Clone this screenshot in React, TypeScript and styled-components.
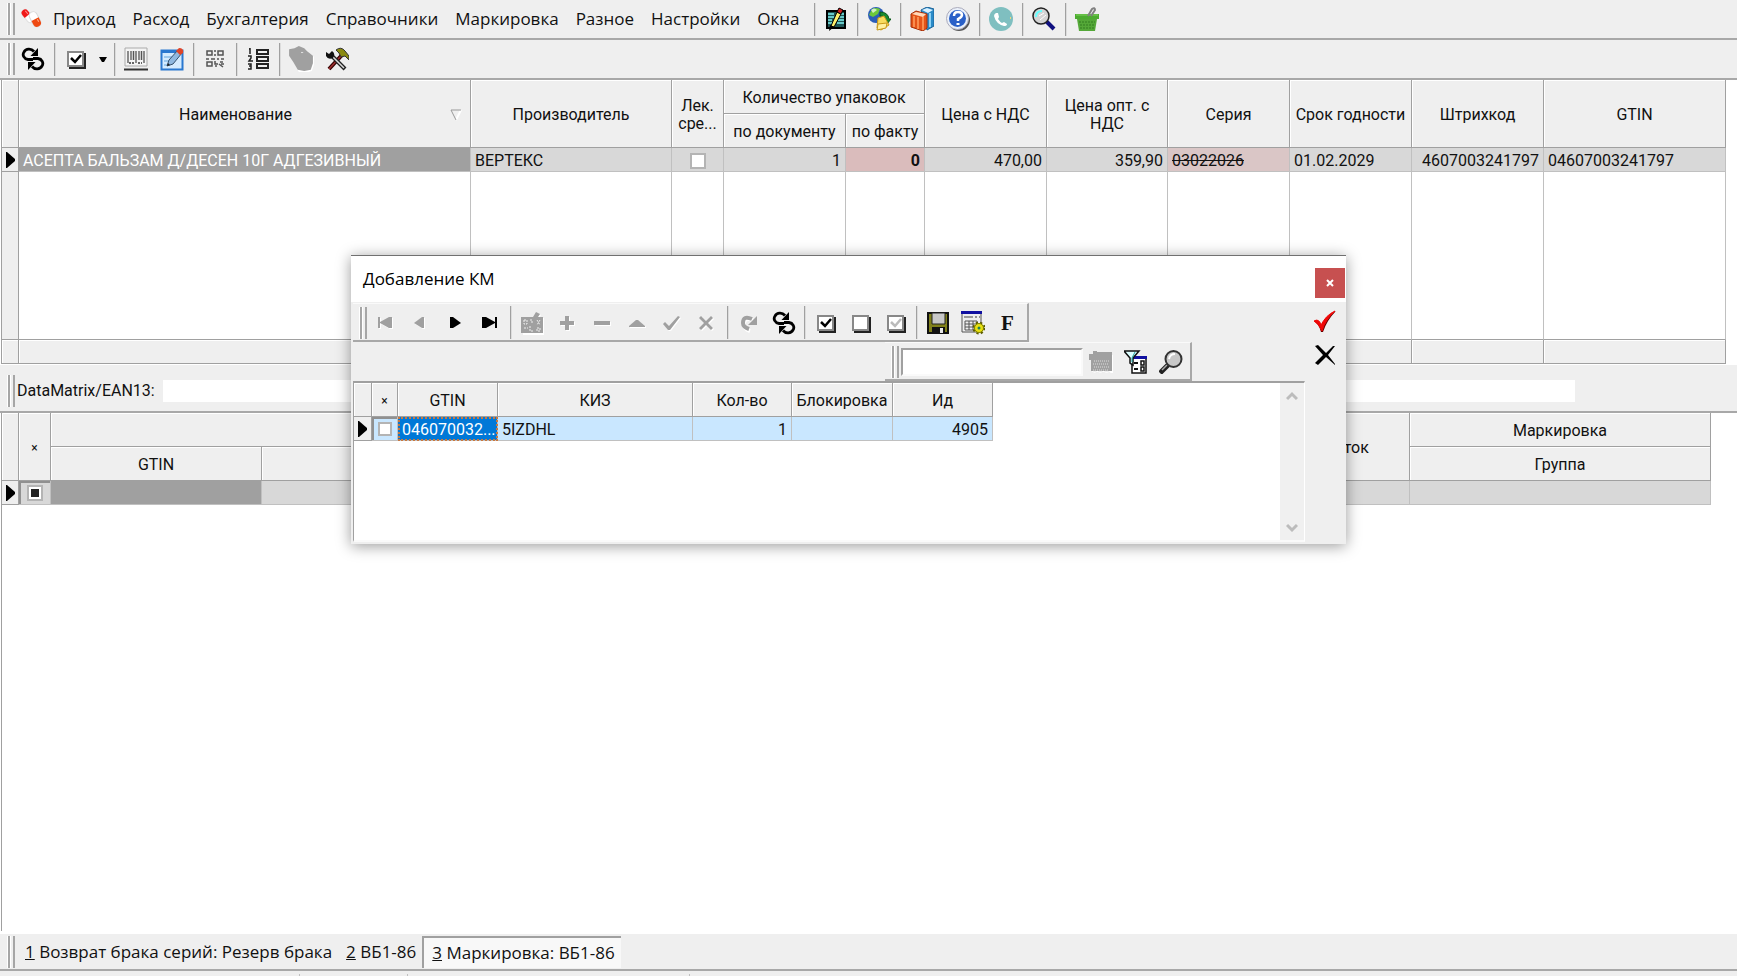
import React from "react";
import styled, { createGlobalStyle, css } from "styled-components";

const line = "#a0a0a0";
const softLine = "#c0c0c0";
const face = "#efefef";

const GlobalStyle = createGlobalStyle`
  *, *::before, *::after { box-sizing: border-box; }
  body { margin: 0; background: #fff; color: #111; }
  button, input { font: inherit; color: inherit; }
`;

const Screen = styled.div`
  position: relative;
  display: flex;
  flex-direction: column;
  min-height: 100vh;
  overflow: hidden;
  font: 16px/18px Roboto, "Liberation Sans", sans-serif;
  background: #fff;
`;

const Bar = styled.div<{ $height: number }>`
  display: flex;
  align-items: center;
  flex: none;
  height: ${(p) => p.$height}px;
  padding-left: 8px;
  background: ${face};
  border-bottom: 2px solid #a8a8a8;
`;

const Grip = styled.span<{ $gap?: number }>`
  flex: none;
  width: 7px;
  height: 32px;
  margin-right: ${(p) => p.$gap ?? 0}px;
  border: solid #a6a6a6;
  border-width: 0 2px;
  box-shadow: -1px 0 #fff, inset 1px 0 #fff;
`;

const Separator = styled.span`
  flex: none;
  width: 2px;
  height: 33px;
  margin: 0 2px 0 3px;
  background: #a0a0a0;
  border-right: 1px solid #dcdcdc;
`;

const IconButton = styled.button<{ $width?: number }>`
  display: grid;
  place-items: center;
  flex: none;
  width: ${(p) => p.$width ?? 36}px;
  height: 32px;
  padding: 0;
  border: 0;
  background: none;
  svg { display: block; }
`;

const FontButton = styled(IconButton)`
  font: bold 21px/24px "Liberation Serif", serif;
`;

const Menu = styled.nav`
  display: flex;
  flex: none;
  width: 768px;
  padding-left: 1px;
`;

const MenuItem = styled.button`
  padding: 0 8px 0 9px;
  border: 0;
  background: none;
  font: 17px/24px "Open Sans", "Noto Sans", sans-serif;
  white-space: nowrap;
`;

const Grid = styled.table`
  width: calc(100% - 12px);
  margin-left: 1px;
  table-layout: fixed;
  border-collapse: separate;
  border-spacing: 0;
  border-left: 1px solid ${line};
`;

const HeadCell = styled.th<{ $height?: number }>`
  height: ${(p) => p.$height ?? 34}px;
  padding: 2px 2px 0;
  overflow: hidden;
  font-weight: 400;
  white-space: nowrap;
  background: ${face};
  border: solid ${line};
  border-width: 0 1px 1px 0;
  box-shadow: inset 1px 1px #fff;
`;

const HeadLabel = styled.span`
  display: flex;
  align-items: center;
  justify-content: center;
  svg { flex: none; margin-right: 6px; }
  span { flex: 1; }
`;

const Mark = styled.span`
  font-size: 12px;
`;

type Tone = "plain" | "selected" | "alarm" | "warning" | "light" | "focus" | "sunken" | "lightSunken";

const tones: Record<Tone, ReturnType<typeof css>> = {
  plain: css`background: #d8d8d8;`,
  selected: css`background: #a0a0a0; color: #fff;`,
  alarm: css`background: #dabcbc; font-weight: 700;`,
  warning: css`background: #dac6c6; text-decoration: line-through;`,
  light: css`background: #c9e7ff;`,
  focus: css`background: #0078d7; color: #fff; outline: 2px dotted #c87840; outline-offset: -2px;`,
  sunken: css`background: #d8d8d8; padding-top: 0; box-shadow: inset 2px 2px #909090;`,
  lightSunken: css`background: #c9e7ff; padding-top: 0; box-shadow: inset 2px 2px #909090;`,
};

const Cell = styled.td<{ $tone?: Tone; $align?: "left" | "right" | "center" }>`
  height: 24px;
  padding: 2px 4px 0 4px;
  overflow: hidden;
  white-space: nowrap;
  text-align: ${(p) => p.$align ?? "left"};
  border: solid ${softLine};
  border-width: 0 1px 1px 0;
  ${(p) => tones[p.$tone ?? "plain"]}
`;

const RowMarker = styled.td`
  padding: 0 0 0 3px;
  background: ${face};
  border: solid ${line};
  border-width: 0 1px 1px 0;
  svg { display: block; }
`;

const EmptyCell = styled.td<{ $face?: boolean }>`
  height: 168px;
  background: ${(p) => (p.$face ? face : "#fff")};
  border-right: 1px solid ${(p) => (p.$face ? line : softLine)};
  border-bottom: 1px solid ${line};
`;

const FootCell = styled.td`
  height: 24px;
  background: ${face};
  border: solid ${line};
  border-width: 0 1px 1px 0;
  box-shadow: inset 1px 1px #fff;
`;

const Tick = styled.input<{ $size: number }>`
  appearance: none;
  display: block;
  width: ${(p) => p.$size}px;
  height: ${(p) => p.$size}px;
  margin: 0 auto;
  background: #fff;
  border: 2px solid #b4b4b4;
  &:checked { background: #222 content-box; padding: 2px; box-shadow: inset 0 0 0 2px #fff; }
`;

const ScanBar = styled(Bar)`
  padding: 6px 162px 0 8px;
  margin-top: 1px;
`;

const ScanLabel = styled.label`
  flex: none;
  width: 148px;
  padding-left: 2px;
`;

const ScanInput = styled.input`
  flex: 1;
  min-width: 0;
  height: 22px;
  padding: 0 4px;
  border: 0;
  background: #fff;
`;

const Lower = styled.div`
  flex: 1;
  min-height: 240px;
  margin-left: 1px;
  border-left: 1px solid ${line};
`;

const LowerGrid = styled(Grid)`
  width: calc(100% - 25px);
  margin-left: -1px;
`;

const TabBar = styled.div`
  display: flex;
  align-items: center;
  flex: none;
  height: 37px;
  margin-top: 3px;
  padding-left: 8px;
  background: ${face};
  border-bottom: 2px solid #a8a8a8;
`;

const Tab = styled.button<{ $active?: boolean }>`
  height: 32px;
  padding: 0 6px 0 8px;
  border: 0;
  background: none;
  font: 17px/24px "Open Sans", "Noto Sans", sans-serif;
  white-space: nowrap;
  ${(p) =>
    p.$active &&
    css`
      background: #f8f8f8;
      border: solid #a0a0a0;
      border-width: 2px 0 0 2px;
    `}
`;

const StatusBar = styled.div`
  display: flex;
  align-items: flex-end;
  flex: none;
  height: 5px;
  background: ${face};
`;

const StatusPane = styled.span<{ $width: number }>`
  width: ${(p) => p.$width}px;
  height: 2px;
  border-right: 1px solid ${softLine};
`;

const Dialog = styled.section`
  position: absolute;
  left: 351px;
  top: 255px;
  width: 995px;
  background: ${face};
  border-top: 1px solid #707070;
  box-shadow: 0 2px 14px rgba(0, 0, 0, 0.4);
`;

const DialogTitle = styled.header`
  display: flex;
  align-items: center;
  justify-content: space-between;
  height: 46px;
  padding: 0 1px 0 12px;
  background: #fff;
`;

const DialogHeading = styled.h1`
  margin: 0;
  font: 17px/24px "Open Sans", "Noto Sans", sans-serif;
  color: #000;
`;

const CloseButton = styled.button`
  display: grid;
  place-items: center;
  width: 30px;
  height: 30px;
  margin-top: 8px;
  padding: 0;
  border: 0;
  background: #c75050;
`;

const DialogBody = styled.div`
  display: flex;
  padding: 1px 0 2px 2px;
`;

const DialogMain = styled.div`
  flex: 1;
  min-width: 0;
`;

const DialogSide = styled.div`
  display: flex;
  flex-direction: column;
  flex: none;
  gap: 1px;
  width: 41px;
  padding: 3px 0 0 2px;
`;

const Panel = styled.div<{ $left?: number }>`
  display: flex;
  align-items: center;
  width: fit-content;
  height: 39px;
  margin-left: ${(p) => p.$left ?? 0}px;
  padding: 1px 2px 0 7px;
  border: solid;
  border-width: 1px 2px 2px 0;
  border-color: #fafafa #a8a8a8 #a8a8a8 #fff;
`;

const FilterInput = styled.input`
  width: 182px;
  height: 28px;
  margin-left: 2px;
  padding: 0 4px;
  background: #fff;
  border: 2px solid;
  border-color: #a0a0a0 #fafafa #fafafa #a0a0a0;
`;

const GridFrame = styled.div`
  display: flex;
  height: 161px;
  border: solid;
  border-width: 2px 1px 2px 1px;
  border-color: #a0a0a0 #fff #fafafa #a0a0a0;
  background: #fff;
`;

const GridArea = styled.div`
  flex: 1;
`;

const DialogGrid = styled(Grid)`
  width: 639px;
  margin: 0;
  border-left: 0;
`;

const Scrollbar = styled.div`
  display: flex;
  flex-direction: column;
  justify-content: space-between;
  width: 24px;
  padding: 3px 0 2px;
  background: #f0f0f0;
`;

const ScrollButton = styled.button`
  display: grid;
  place-items: center;
  height: 20px;
  padding: 0;
  border: 0;
  background: none;
`;

const Svg = ({ size = 24, children }: { size?: number; children: React.ReactNode }) => (
  <svg width={size} height={size} viewBox="0 0 24 24" fill="none" aria-hidden="true">
    {children}
  </svg>
);

const Pill = () => (
  <Svg>
    <g transform="rotate(50 8 9)">
      <rect x="1" y="5" width="15" height="7" rx="3.500" fill="#fff" stroke="#e0e0e0" />
      <path d="M8 5H4.500a3.500 3.500 0 0 0 0 7H8z" fill="#f01818" />
      <path d="M3 7h4" stroke="#ff8a8a" />
    </g>
    <g transform="rotate(62 17 14)">
      <rect x="7" y="10" width="16" height="8" rx="4" fill="#fff" stroke="#d8d8d8" />
      <path d="M15 10h4a4 4 0 0 1 0 8h-4z" fill="#ef4a12" />
      <path d="M16 12h3" stroke="#ffb090" />
    </g>
  </Svg>
);

const RefreshHalf = () => (
  <>
    <path d="M12 12.500H7C3 12 1 8 3 5C5 1.500 10 1 13 4.500" stroke="#000" strokeWidth="2.800" />
    <path d="M17 1v8H9.500z" fill="#000" />
  </>
);

const Refresh = () => (
  <Svg>
    <RefreshHalf />
    <g transform="rotate(180 12 12)">
      <RefreshHalf />
    </g>
  </Svg>
);

const BoxIcon = ({ check }: { check?: string }) => (
  <Svg>
    <path d="M5 6h17v16H5z" fill="#222" />
    <path d="M4 5h15v14H4z" fill="#fff" stroke="#888" strokeWidth="2" />
    {check && <path d="M7 11l4 4l6-7" stroke={check} strokeWidth="2.500" />}
  </Svg>
);

const Caret = () => (
  <svg width="8" height="5" viewBox="0 0 8 5" aria-hidden="true">
    <path d="M0 0h8L5 5H3z" fill="#000" />
  </svg>
);

const Barcode = () => (
  <Svg>
    <path d="M1 1h22v18H1z" fill="#f4f4f4" stroke="#aaa" />
    <path d="M0 22.500h24" stroke="#333" strokeWidth="2" />
    <path d="M4 4v12M7 4v9M12 4v12M15 4v9M20 4v12" stroke="#555" strokeWidth="1.300" />
    <path d="M9.500 4v9M17.500 4v9" stroke="#555" strokeWidth="1.500" />
    <path d="M5 16h6M14 16h4" stroke="#666" strokeWidth="2" strokeDasharray="2 1" />
  </Svg>
);

const EditForm = () => (
  <Svg>
    <path d="M1.500 3.500h21v19h-21z" fill="#d4ebff" stroke="#2a78d0" strokeWidth="2" />
    <path d="M1 3h21v3H1z" fill="#2a78d0" />
    <path d="M4 10h13M4 14h9M4 18h6" stroke="#9cc8ee" strokeWidth="2" />
    <path d="M7 19l2-6L18 3l4 3l-9 11z" fill="#8fb8e0" stroke="#35506c" />
    <path d="M16 4l3-3q5 0 4 5l-3 2z" fill="#e04428" />
    <path d="M7 19l1-3l2 2z" fill="#222" />
  </Svg>
);

const QrCode = () => (
  <Svg>
    <g stroke="#555" strokeWidth="1.500">
      <path d="M4 4h5v4H4zM15 4h5v4h-5zM4 15h5v4H4z" />
      <path d="M12 3v2M12 7v2M3 12h3M8 12h4M14 12h2M18 12h3M12 14v3h3M17 15h3M12 19h2M16 17l4 3M18 17h3" />
    </g>
  </Svg>
);

const NumberedList = () => (
  <Svg>
    <g stroke="#222" strokeWidth="2">
      <path d="M11 3h11v4H11zM11 10h11v4H11zM11 17h11v4H11z" />
      <path d="M4 1v6M3 2h1M2 9h3v2L3 14h4M2 17h3v2H3M5 19v3H2" strokeWidth="1.500" />
    </g>
  </Svg>
);

const Hand = () => (
  <Svg size={26}>
    <path d="M1 3l5-1l4-2l5 2l3 3l5 4v7l-2 6l-6 2l-6-1l-4-8l-4-6z" fill="#fff" transform="translate(1 1)" />
    <path d="M1 3l5-1l4-2l5 2l3 3l5 4v7l-2 6l-6 1l-6-1l-4-7l-4-6z" fill="#a0a0a0" />
    <path d="M12 6h2" stroke="#ddd" strokeWidth="1" />
  </Svg>
);

const Tools = () => (
  <Svg>
    <path d="M4 22L17 8" stroke="#300" strokeWidth="4" />
    <path d="M4 22L17 8" stroke="#a03030" strokeWidth="1.500" />
    <path d="M6 8l14 14" stroke="#222" strokeWidth="4" />
    <path d="M7 9l12 12" stroke="#ddd" strokeWidth="1.500" />
    <path d="M1 5l3 2l3-3q4 3 1 7q-5 2-7-2z" fill="#111" />
    <path d="M11 3q5-4 9 1l4 5v4l-4-4l-4 1l-2-4z" fill="#8a8a10" stroke="#333" />
  </Svg>
);

const Notebook = () => (
  <Svg>
    <path d="M3 4h18v17H3z" fill="#1f5656" stroke="#000" strokeWidth="2" />
    <path d="M4 7h6M4 10h6M4 13h4M4 16h4M14 7h6M15 10h5M14 13h6M13 16h7" stroke="#7ff0f0" strokeWidth="1.500" />
    <path d="M7 19L13 5l4 2L10 20z" fill="#fff06a" stroke="#000" />
    <path d="M13 5l2-4l4 2l-2 4z" fill="#d02020" stroke="#000" />
    <path d="M5 24l1-6l4 2z" fill="#000" />
  </Svg>
);

const Globe = () => (
  <Svg>
    <circle cx="9" cy="8" r="8" fill="#2c5eb8" />
    <path d="M5 2q4-2 8 0l-2 5l-5 3l-4-2z" fill="#6cc83c" />
    <path d="M4 3q3-3 6 0l-4 3z" fill="#fff" opacity=".7" />
    <path d="M13 5q8 0 9 7l2 0l-4 5l-4-4h2q0-4-5-4z" fill="#188a30" stroke="#0a5818" />
    <path d="M11 11l6-2l5 9l-8 5l-4-2z" fill="#f8dc60" stroke="#c89818" />
    <path d="M11 17l9-1l-1 5l-9 2z" fill="#fff0a0" stroke="#c89818" />
  </Svg>
);

const Books = () => (
  <Svg>
    <path d="M11 3l6-3l7 2v17l-7 4z" fill="#2a8ac8" stroke="#1a6298" />
    <path d="M12 3l5-2l6 2l-5 3z" fill="#d8f0ff" />
    <path d="M20 6v14" stroke="#8ad0f4" strokeWidth="2" />
    <path d="M1 7l5-3l11 3v14l-4 3L1 20z" fill="#e45418" stroke="#a83008" />
    <path d="M2 7l4-2l10 2l-3 3z" fill="#ffd8b8" />
    <path d="M13 10v13M4 9v11M8 10v12" stroke="#ffa060" strokeWidth="1.500" />
  </Svg>
);

const Help = () => (
  <Svg>
    <circle cx="13" cy="13" r="11" fill="#555" />
    <circle cx="11.500" cy="11.500" r="11" fill="#eaf0fa" stroke="#aab" />
    <circle cx="11.500" cy="11.500" r="8.500" fill="#2a60c8" />
    <path d="M8 9q0-4 4-4t4 3q0 2-4 4v2" stroke="#fff" strokeWidth="2.500" />
    <path d="M10.500 16h3v2h-3z" fill="#fff" />
  </Svg>
);

const Phone = () => (
  <Svg>
    <circle cx="12" cy="12" r="12" fill="#7fbfc0" />
    <path d="M7 6l2 0l1 4l-1 2q2 3 4 4l2-1l3 2q0 2-3 2q-8-2-10-10q0-2 2-3z" fill="#fff" />
    <path d="M21 11h1" stroke="#ecd880" strokeWidth="2" />
  </Svg>
);

const Magnifier = () => (
  <Svg>
    <path d="M14 14l8 8" stroke="#101080" strokeWidth="4" />
    <circle cx="9" cy="9" r="8" fill="#d4d4d4" stroke="#222" strokeWidth="1.500" />
    <path d="M4 10q0-6 6-6" stroke="#6ff" strokeWidth="2" />
    <path d="M7 9l5-3M8 13l6-5" stroke="#fff" />
  </Svg>
);

const Basket = () => (
  <Svg>
    <path d="M0 7h24v5H0z" fill="#4cac30" />
    <path d="M2 12h20l-2 12H4z" fill="#54a838" />
    <path d="M4 15h16M5 18h14M5 21h14" stroke="#327c20" strokeWidth="1" strokeDasharray="2 1" />
    <path d="M1 8h22" stroke="#7fd45c" />
    <path d="M13 9l4-7q3-2 3 1l-4 6" stroke="#808080" strokeWidth="2" />
  </Svg>
);

const Nav = ({ d, off }: { d: string; off?: boolean }) => (
  <Svg>
    {off && <path d={d} fill="#fff" transform="translate(1 1)" />}
    <path d={d} fill={off ? "#a0a0a0" : "#000"} />
  </Svg>
);

const first = "M5 6h2v5l9-5h3v11h-3l-9-5v5H5z";
const prev = "M6 12l8-6h2v11h-2z";
const next = "M18 12l-8-6H7v11h3z";
const last = "M19 6h-2v5L8 6H4v11h4l9-5v5h2z";
const plus = "M10 5h4v5h5v4h-5v5h-4v-5H5v-4h5z";
const minus = "M4 10h16v4H4z";
const up = "M4 16v-1l7-6h2l7 6v1z";
const tick = "M3 13l2-2l4 4L18 5l2 1L10 19H8z";
const cross = "M4 7l2-2l5 5l5-5l2 2l-5 5l5 5l-2 2l-5-5l-5 5l-2-2l5-5z";

const GridEdit = () => (
  <Svg>
    <path d="M1 6h12l3-5l4 2l-2 3h5v17H2z" fill="#fff" transform="translate(1 1)" />
    <path d="M1 6h12l3-5l4 2l-2 3h5v16H1z" fill="#a0a0a0" />
    <path d="M4 9h3v4H4zM10 9h2v4M17 9l3 5M20 9l-3 5M4 17h4M10 15v5h3M17 17h3v3h-3z" stroke="#eee" strokeDasharray="2 1" />
  </Svg>
);

const Redo = () => (
  <Svg>
    <path d="M15 8Q6 5 6 12q0 5 6 7" stroke="#fff" strokeWidth="4" transform="translate(1 1)" />
    <path d="M15 8Q6 4 6 12q0 4 6 6" stroke="#a0a0a0" strokeWidth="4" />
    <path d="M20 5v9h-9z" fill="#a0a0a0" />
  </Svg>
);

const Floppy = () => (
  <Svg>
    <path d="M2 2h20v20H2z" fill="#80801a" stroke="#111" strokeWidth="2" />
    <path d="M6 2h13v11H6z" fill="#c8c8c8" stroke="#222" />
    <path d="M6 16h13v6H6z" fill="#111" />
    <path d="M14 17h3v5h-3z" fill="#e8e8e8" />
  </Svg>
);

const FormGear = () => (
  <Svg>
    <path d="M1 2h19v19H1z" fill="#eee" stroke="#555" />
    <path d="M0 0h21v3H0z" fill="#1010a0" />
    <path d="M3 6h9" stroke="#999" strokeWidth="2" />
    <path d="M14 6h2M18 6h1" stroke="#333" strokeWidth="1" />
    <path d="M4 10h12v9H4zM8 10v9M12 10v9M4 13h12M4 16h12" stroke="#555" />
    <circle cx="18" cy="17" r="5" fill="#d8d010" stroke="#5a5a00" strokeWidth="3" strokeDasharray="2 2" />
    <circle cx="18" cy="17" r="4.500" fill="#e8e010" stroke="#808000" />
    <circle cx="18" cy="17" r="1.500" fill="#208050" />
  </Svg>
);

const Calendar = () => (
  <Svg>
    <path d="M1 4h3V2h3v2h16v18H2z" fill="#fff" transform="translate(1 1)" />
    <path d="M0 4h4V1h4v1h15v19H2V10H0z" fill="#a0a0a0" />
    <path d="M5 11h16M4 14h16M5 17h16M4 20h16" stroke="#ddd" strokeDasharray="1 1" />
    <path d="M3 23q3-3 5 0q4-3 6 0q4-3 7 0" stroke="#eee" strokeWidth="1.500" />
  </Svg>
);

const Funnel = () => (
  <Svg>
    <path d="M8 7h14v16H8z" fill="#fff" stroke="#111" strokeWidth="1.500" />
    <path d="M9 6h14v3H9z" fill="#1010a0" />
    <path d="M10 13h4M10 19h4" stroke="#111" strokeWidth="2" />
    <path d="M17 11h3v4h-3zM17 17h3v4h-3z" stroke="#111" strokeWidth="1.500" />
    <path d="M0 1h15L9 8v7l-3-2V8z" fill="#dff" stroke="#111" strokeWidth="1.500" />
    <path d="M11 2L8 8v4" stroke="#20a0a0" />
  </Svg>
);

const SearchLens = () => (
  <Svg>
    <path d="M9 15l-8 8" stroke="#222" strokeWidth="5" />
    <path d="M8 15l-5 5" stroke="#aaa" strokeWidth="1.500" />
    <circle cx="14.500" cy="9" r="8" fill="#c8c8c8" stroke="#333" strokeWidth="2" />
    <path d="M10 9q1-5 6-5" stroke="#fff" strokeWidth="2" />
  </Svg>
);

const Accept = () => (
  <Svg>
    <path d="M1 11q5-1 7 5Q13 6 23 1Q14 10 10 22H8Q6 14 1 11z" fill="#600" />
    <path d="M1 11q5-3 7 4Q13 5 22 1Q12 10 9 21Q6 14 1 11z" fill="#f00808" stroke="#f00808" />
  </Svg>
);

const Reject = () => (
  <Svg>
    <path d="M2 3l3-1l8 8l7-7l2 0l-7 9l7 9l0 1l-9-8l-8 8l-3-2l8-8z" fill="#000" />
  </Svg>
);

const Marker = () => (
  <svg width="10" height="16" viewBox="0 0 10 16" aria-hidden="true">
    <path d="M1 0h1l8 7v2l-8 7H1z" fill="#000" />
  </svg>
);

const SortMark = () => (
  <svg width="12" height="12" viewBox="0 0 12 12" fill="none" aria-hidden="true">
    <path d="M11 1L6 11" stroke="#fff" strokeWidth="2" />
    <path d="M11 1H1l5 10" stroke="#999" />
  </svg>
);

const Chevron = ({ flip }: { flip?: boolean }) => (
  <svg width="12" height="10" viewBox="0 0 12 10" fill="none" aria-hidden="true">
    <path d={flip ? "M1 2l5 5l5-5" : "M1 8l5-5l5 5"} stroke="#bcbcbc" strokeWidth="3" />
  </svg>
);

const menuItems = ["Приход", "Расход", "Бухгалтерия", "Справочники", "Маркировка", "Разное", "Настройки", "Окна"];

const topGroups: [string, React.ReactNode][][] = [
  [["Журнал", <Notebook />]],
  [["Обмен", <Globe />]],
  [["Справочник", <Books />], ["Справка", <Help />]],
  [["Телефон", <Phone />]],
  [["Поиск", <Magnifier />]],
  [["Корзина", <Basket />]],
];

const dialogGroups: [string, React.ReactNode][][] = [
  [
    ["Первая", <Nav d={first} off />],
    ["Предыдущая", <Nav d={prev} off />],
    ["Следующая", <Nav d={next} />],
    ["Последняя", <Nav d={last} />],
  ],
  [
    ["Изменить", <GridEdit />],
    ["Добавить", <Nav d={plus} off />],
    ["Удалить", <Nav d={minus} off />],
    ["Правка", <Nav d={up} off />],
    ["Сохранить", <Nav d={tick} off />],
    ["Отменить", <Nav d={cross} off />],
  ],
  [["Повторить", <Redo />], ["Обновить", <Refresh />]],
  [
    ["Отметить все", <BoxIcon check="#000" />],
    ["Снять отметки", <BoxIcon />],
    ["Обратить отметки", <BoxIcon check="#bbb" />],
  ],
];

const mainColumns = [17, 452, 201, 52, 122, 79, 122, 121, 122, 122, 132];
const lowerColumns = [17, 32, 211, 1006, 142];
const dialogColumns = [18, 26, 100, 195, 99, 101, 100];

const Columns = ({ widths, rest }: { widths: number[]; rest?: boolean }) => (
  <colgroup>
    {widths.map((width, i) => (
      <col key={i} width={width} />
    ))}
    {rest && <col />}
  </colgroup>
);

export default function App() {
  return (
    <Screen>
      <GlobalStyle />
      <Bar $height={40}>
        <Grip $gap={4} />
        <Pill />
        <Menu>
          {menuItems.map((item) => (
            <MenuItem key={item}>{item}</MenuItem>
          ))}
        </Menu>
        {topGroups.map((group, i) => (
          <React.Fragment key={i}>
            <Separator />
            {group.map(([label, icon]) => (
              <IconButton key={label} aria-label={label}>{icon}</IconButton>
            ))}
          </React.Fragment>
        ))}
      </Bar>
      <Bar $height={40}>
        <Grip />
        <IconButton aria-label="Обновить"><Refresh /></IconButton>
        <Separator />
        <IconButton aria-label="Отметить"><BoxIcon check="#000" /></IconButton>
        <IconButton $width={17} aria-label="Варианты отметки"><Caret /></IconButton>
        <Separator />
        <IconButton aria-label="Штрихкод"><Barcode /></IconButton>
        <IconButton aria-label="Редактировать"><EditForm /></IconButton>
        <Separator />
        <IconButton aria-label="QR-код"><QrCode /></IconButton>
        <Separator />
        <IconButton aria-label="Нумерация"><NumberedList /></IconButton>
        <Separator />
        <IconButton aria-label="Остановить"><Hand /></IconButton>
        <IconButton aria-label="Инструменты"><Tools /></IconButton>
      </Bar>

      <Grid>
        <Columns widths={mainColumns} rest />
        <thead>
          <tr>
            <HeadCell rowSpan={2} />
            <HeadCell rowSpan={2}>
              <HeadLabel><span>Наименование</span><SortMark /></HeadLabel>
            </HeadCell>
            <HeadCell rowSpan={2}>Производитель</HeadCell>
            <HeadCell rowSpan={2}>Лек.<br />сре...</HeadCell>
            <HeadCell colSpan={2}>Количество упаковок</HeadCell>
            <HeadCell rowSpan={2}>Цена с НДС</HeadCell>
            <HeadCell rowSpan={2}>Цена опт. с<br />НДС</HeadCell>
            <HeadCell rowSpan={2}>Серия</HeadCell>
            <HeadCell rowSpan={2}>Срок годности</HeadCell>
            <HeadCell rowSpan={2}>Штрихкод</HeadCell>
            <HeadCell rowSpan={2}>GTIN</HeadCell>
          </tr>
          <tr>
            <HeadCell>по документу</HeadCell>
            <HeadCell>по факту</HeadCell>
          </tr>
        </thead>
        <tbody>
          <tr>
            <RowMarker><Marker /></RowMarker>
            <Cell $tone="selected">АСЕПТА БАЛЬЗАМ Д/ДЕСЕН 10Г АДГЕЗИВНЫЙ</Cell>
            <Cell>ВЕРТЕКС</Cell>
            <Cell><Tick type="checkbox" $size={16} aria-label="Лекарственное средство" /></Cell>
            <Cell $align="right">1</Cell>
            <Cell $align="right" $tone="alarm">0</Cell>
            <Cell $align="right">470,00</Cell>
            <Cell $align="right">359,90</Cell>
            <Cell $tone="warning">03022026</Cell>
            <Cell>01.02.2029</Cell>
            <Cell $align="right">4607003241797</Cell>
            <Cell>04607003241797</Cell>
          </tr>
          <tr>
            <EmptyCell $face />
            {Array.from({ length: 11 }, (_, i) => (
              <EmptyCell key={i} />
            ))}
          </tr>
        </tbody>
        <tfoot>
          <tr>
            {Array.from({ length: 12 }, (_, i) => (
              <FootCell key={i} />
            ))}
          </tr>
        </tfoot>
      </Grid>

      <ScanBar $height={48}>
        <Grip />
        <ScanLabel htmlFor="scan">DataMatrix/EAN13:</ScanLabel>
        <ScanInput id="scan" type="text" />
      </ScanBar>

      <Lower>
        <LowerGrid>
          <Columns widths={lowerColumns} rest />
          <thead>
            <tr>
              <HeadCell rowSpan={2} />
              <HeadCell rowSpan={2}><Mark>×</Mark></HeadCell>
              <HeadCell colSpan={2} />
              <HeadCell rowSpan={2}>Остаток</HeadCell>
              <HeadCell>Маркировка</HeadCell>
            </tr>
            <tr>
              <HeadCell>GTIN</HeadCell>
              <HeadCell />
              <HeadCell>Группа</HeadCell>
            </tr>
          </thead>
          <tbody>
            <tr>
              <RowMarker><Marker /></RowMarker>
              <Cell $tone="sunken"><Tick type="checkbox" defaultChecked $size={16} aria-label="Отметка строки" /></Cell>
              <Cell $tone="selected" />
              <Cell />
              <Cell />
              <Cell />
            </tr>
          </tbody>
        </LowerGrid>
      </Lower>

      <TabBar>
        <Grip $gap={2} />
        <Tab><u>1</u> Возврат брака серий: Резерв брака</Tab>
        <Tab><u>2</u> ВБ1-86</Tab>
        <Tab $active><u>3</u> Маркировка: ВБ1-86</Tab>
      </TabBar>
      <StatusBar>
        <StatusPane $width={300} />
        <StatusPane $width={108} />
        <StatusPane $width={282} />
      </StatusBar>

      <Dialog role="dialog" aria-labelledby="dialog-title">
        <DialogTitle>
          <DialogHeading id="dialog-title">Добавление КМ</DialogHeading>
          <CloseButton aria-label="Закрыть">
            <svg width="8" height="8" viewBox="0 0 8 8" aria-hidden="true">
              <path d="M1 1l6 6M7 1l-6 6" stroke="#fff" strokeWidth="2" />
            </svg>
          </CloseButton>
        </DialogTitle>
        <DialogBody>
          <DialogMain>
            <Panel>
              <Grip />
              {dialogGroups.map((group, i) => (
                <React.Fragment key={i}>
                  {group.map(([label, icon]) => (
                    <IconButton key={label} $width={35} aria-label={label}>{icon}</IconButton>
                  ))}
                  <Separator />
                </React.Fragment>
              ))}
              <IconButton $width={35} aria-label="Сохранить в файл"><Floppy /></IconButton>
              <IconButton $width={35} aria-label="Настройка формы"><FormGear /></IconButton>
              <FontButton $width={35} aria-label="Шрифт">F</FontButton>
            </Panel>
            <Panel $left={532}>
              <Grip />
              <FilterInput type="text" aria-label="Фильтр" />
              <IconButton $width={35} aria-label="Календарь"><Calendar /></IconButton>
              <IconButton $width={35} aria-label="Отбор"><Funnel /></IconButton>
              <IconButton $width={35} aria-label="Найти"><SearchLens /></IconButton>
            </Panel>
            <GridFrame>
              <GridArea>
                <DialogGrid>
                  <Columns widths={dialogColumns} />
                  <thead>
                    <tr>
                      <HeadCell />
                      <HeadCell><Mark>×</Mark></HeadCell>
                      <HeadCell>GTIN</HeadCell>
                      <HeadCell>КИЗ</HeadCell>
                      <HeadCell>Кол-во</HeadCell>
                      <HeadCell>Блокировка</HeadCell>
                      <HeadCell>Ид</HeadCell>
                    </tr>
                  </thead>
                  <tbody>
                    <tr>
                      <RowMarker><Marker /></RowMarker>
                      <Cell $tone="lightSunken"><Tick type="checkbox" $size={14} aria-label="Отметка КМ" /></Cell>
                      <Cell $tone="focus">046070032...</Cell>
                      <Cell $tone="light">5IZDHL</Cell>
                      <Cell $tone="light" $align="right">1</Cell>
                      <Cell $tone="light" />
                      <Cell $tone="light" $align="right">4905</Cell>
                    </tr>
                  </tbody>
                </DialogGrid>
              </GridArea>
              <Scrollbar>
                <ScrollButton aria-label="Вверх"><Chevron /></ScrollButton>
                <ScrollButton aria-label="Вниз"><Chevron flip /></ScrollButton>
              </Scrollbar>
            </GridFrame>
          </DialogMain>
          <DialogSide>
            <IconButton aria-label="Принять"><Accept /></IconButton>
            <IconButton aria-label="Отказаться"><Reject /></IconButton>
          </DialogSide>
        </DialogBody>
      </Dialog>
    </Screen>
  );
}
